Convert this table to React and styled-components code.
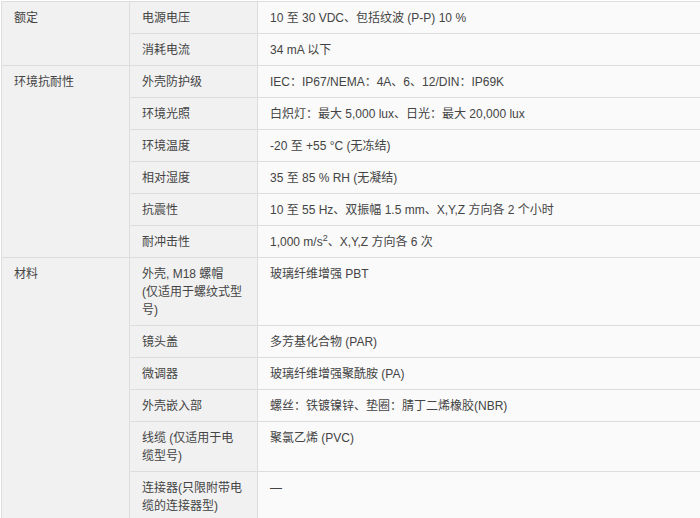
import React from "react";
import styled, { createGlobalStyle } from "styled-components";

const GlobalStyle = createGlobalStyle`
  html, body {
    margin: 0;
    padding: 0;
    background: #ffffff;
    overflow: hidden;
  }
  body {
    padding: 1px 0 0 1px;
  }
`;

const SpecTable = styled.table`
  width: 712px;
  border-collapse: collapse;
  table-layout: fixed;
  font-family: "Liberation Sans", "Noto Sans CJK SC", sans-serif;
  font-size: 12px;
  line-height: 18px;
  color: #444444;
`;

const Col = styled.col`
  width: ${(p) => p.$width};
`;

const Cell = styled.td`
  border: 1px solid #dddddd;
  padding: 7px 12px 6px 12px;
  vertical-align: top;
  background: ${(p) => (p.$value ? "#fafafa" : "#f1f1f1")};
`;

const Sup = styled.sup`
  font-size: 9px;
  line-height: 0;
  vertical-align: 5px;
`;

const groups = [
  {
    title: "额定",
    rows: [
      ["电源电压", "10 至 30 VDC、包括纹波 (P-P) 10 %"],
      ["消耗电流", "34 mA 以下"],
    ],
  },
  {
    title: "环境抗耐性",
    rows: [
      ["外壳防护级", "IEC：IP67/NEMA：4A、6、12/DIN：IP69K"],
      ["环境光照", "白炽灯：最大 5,000 lux、日光：最大 20,000 lux"],
      ["环境温度", "-20 至 +55 °C (无冻结)"],
      ["相对湿度", "35 至 85 % RH (无凝结)"],
      ["抗震性", "10 至 55 Hz、双振幅 1.5 mm、X,Y,Z 方向各 2 个小时"],
      [
        "耐冲击性",
        <>
          1,000 m/s<Sup>2</Sup>、X,Y,Z 方向各 6 次
        </>,
      ],
    ],
  },
  {
    title: "材料",
    rows: [
      [
        <>
          外壳, M18 螺帽
          <br />
          (仅适用于螺纹式型号)
        </>,
        "玻璃纤维增强 PBT",
      ],
      ["镜头盖", "多芳基化合物 (PAR)"],
      ["微调器", "玻璃纤维增强聚酰胺 (PA)"],
      ["外壳嵌入部", "螺丝：铁镀镍锌、垫圈：腈丁二烯橡胶(NBR)"],
      ["线缆 (仅适用于电缆型号)", "聚氯乙烯 (PVC)"],
      ["连接器(只限附带电缆的连接器型)", "—"],
    ],
  },
];

export default function App() {
  return (
    <>
      <GlobalStyle />
      <SpecTable>
        <colgroup>
          <Col $width="128px" />
          <Col $width="128px" />
          <Col $width="456px" />
        </colgroup>
        <tbody>
          {groups.map((g) =>
            g.rows.map(([label, value], i) => (
              <tr key={g.title + i}>
                {i === 0 && <Cell rowSpan={g.rows.length}>{g.title}</Cell>}
                <Cell>{label}</Cell>
                <Cell $value>{value}</Cell>
              </tr>
            ))
          )}
        </tbody>
      </SpecTable>
    </>
  );
}
